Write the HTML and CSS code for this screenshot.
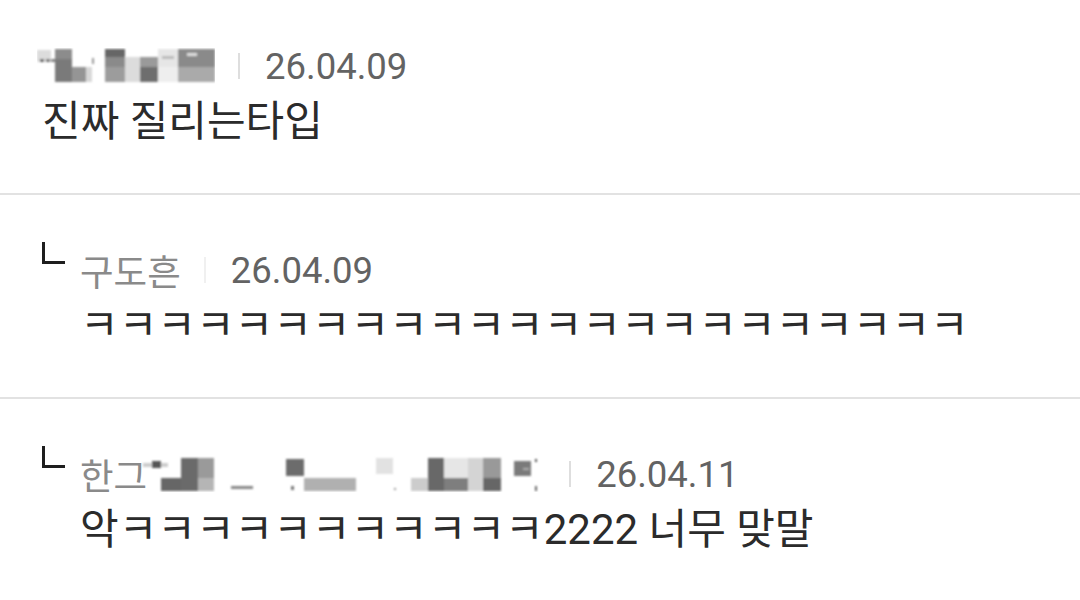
FILE: index.html
```html
<!DOCTYPE html>
<html lang="ko">
<head>
    <meta charset="UTF-8">
    <meta name="viewport" content="width=device-width, initial-scale=1.0">
    <title>댓글</title>
    <link rel="stylesheet" href="styles.css">
</head>
<body>
    <ul class="comments">
        <li class="comment">
            <div class="comment-body">
                <div class="meta">
                    <svg class="mosaic mosaic-1" width="178" height="36" viewBox="0 0 178 36">
                        <defs>
                            <filter id="soft1"><feGaussianBlur stdDeviation="0.9"/></filter>
                        </defs>
                        <g filter="url(#soft1)">
                            <rect x="0" y="2" width="14" height="12" fill="#dcdcdc"/>
                            <rect x="3" y="11" width="4" height="3" fill="#666"/>
                            <rect x="9" y="11" width="4" height="3" fill="#777"/>
                            <rect x="14" y="11" width="4" height="3" fill="#888"/>
                            <rect x="18" y="1" width="17" height="10" fill="#8c8c8c"/>
                            <rect x="18" y="11" width="17" height="23" fill="#7a7a7a"/>
                            <rect x="35" y="19" width="14" height="15" fill="#959595"/>
                            <rect x="49" y="19" width="6" height="15" fill="#d8d8d8"/>
                            <rect x="55" y="10" width="2" height="6" fill="#999"/>
                            <rect x="68" y="1" width="20" height="8" fill="#666"/>
                            <rect x="68" y="9" width="20" height="10" fill="#8a8a8a"/>
                            <rect x="68" y="19" width="20" height="15" fill="#9c9c9c"/>
                            <rect x="88" y="9" width="15" height="25" fill="#dcdcdc"/>
                            <rect x="103" y="9" width="18" height="10" fill="#9a9a9a"/>
                            <rect x="103" y="19" width="18" height="15" fill="#6e6e6e"/>
                            <rect x="121" y="1" width="20" height="18" fill="#e6e6e6"/>
                            <rect x="125" y="8" width="12" height="3" fill="#bbb"/>
                            <rect x="121" y="19" width="20" height="15" fill="#eee"/>
                            <rect x="141" y="1" width="37" height="18" fill="#8a8a8a"/>
                            <rect x="150" y="5" width="10" height="3" fill="#ddd"/>
                            <rect x="141" y="19" width="37" height="15" fill="#aaa"/>
                        </g>
                    </svg>
                    <span class="sep"></span>
                    <span class="date">26.04.09</span>
                </div>
                <p class="text">진짜 질리는타입</p>
            </div>
        </li>

        <li class="comment reply">
            <span class="reply-mark"></span>
            <div class="comment-body">
                <div class="meta">
                    <span class="name">구도흔</span>
                    <span class="sep sep-faint"></span>
                    <span class="date">26.04.09</span>
                </div>
                <p class="text">ㅋㅋㅋㅋㅋㅋㅋㅋㅋㅋㅋㅋㅋㅋㅋㅋㅋㅋㅋㅋㅋㅋㅋ</p>
            </div>
        </li>

        <li class="comment reply">
            <span class="reply-mark"></span>
            <div class="comment-body">
                <div class="meta">
                    <span class="name">한그</span>
                    <svg class="mosaic mosaic-3" width="420" height="36" viewBox="0 0 420 36">
                        <defs>
                            <filter id="soft3"><feGaussianBlur stdDeviation="0.9"/></filter>
                        </defs>
                        <g filter="url(#soft3)">
                            <rect x="17" y="7" width="25" height="4" fill="#ccc"/>
                            <rect x="26" y="5" width="9" height="7" fill="#555"/>
                            <rect x="35" y="22" width="20" height="13" fill="#666"/>
                            <rect x="55" y="2" width="17" height="33" fill="#6a6a6a"/>
                            <rect x="72" y="2" width="16" height="20" fill="#9a9a9a"/>
                            <rect x="72" y="22" width="16" height="13" fill="#b5b5b5"/>
                            <rect x="105" y="30" width="22" height="3" fill="#888"/>
                            <rect x="160" y="3" width="18" height="17" fill="#6c6c6c"/>
                            <rect x="165" y="30" width="3" height="4" fill="#777"/>
                            <rect x="178" y="22" width="52" height="13" fill="#b0b0b0"/>
                            <rect x="250" y="2" width="17" height="16" fill="#e2e2e2"/>
                            <rect x="268" y="32" width="2" height="2" fill="#999"/>
                            <rect x="285" y="22" width="17" height="13" fill="#ccc"/>
                            <rect x="302" y="2" width="16" height="33" fill="#686868"/>
                            <rect x="318" y="2" width="24" height="20" fill="#e6e6e6"/>
                            <rect x="318" y="22" width="24" height="13" fill="#7e7e7e"/>
                            <rect x="342" y="2" width="15" height="33" fill="#d4d4d4"/>
                            <rect x="357" y="2" width="18" height="20" fill="#999"/>
                            <rect x="357" y="22" width="18" height="13" fill="#666"/>
                            <rect x="388" y="5" width="17" height="15" fill="#7a7a7a"/>
                            <rect x="397" y="12" width="6" height="2" fill="#aaa"/>
                            <rect x="409" y="3" width="2" height="3" fill="#555"/>
                            <rect x="409" y="30" width="2" height="5" fill="#666"/>
                        </g>
                    </svg>
                    <span class="sep"></span>
                    <span class="date">26.04.11</span>
                </div>
                <p class="text">악ㅋㅋㅋㅋㅋㅋㅋㅋㅋㅋㅋ2222 너무 맞말</p>
            </div>
        </li>
    </ul>
</body>
</html>
```

FILE: styles.css
```css
:root {
    --text-color: #2b2b2b;
    --date-color: #636363;
    --name-color: #8a8a8a;
    --line-color: #e2e2e2;
}

* {
    margin: 0;
    padding: 0;
    box-sizing: border-box;
}

body {
    background: #ffffff;
    color: var(--text-color);
    font-family: Roboto, "Noto Sans CJK KR", sans-serif;
    overflow: hidden;
}

.comments {
    list-style: none;
    margin-top: -9px;
}

.comment {
    display: flex;
    align-items: flex-start;
    padding: 51px 0 45px 42px;
    border-bottom: 2px solid var(--line-color);
}

.comment-body {
    display: flex;
    flex-direction: column;
}

.meta {
    display: flex;
    align-items: center;
    height: 48px;
}

.mosaic-1 {
    margin-left: -5px;
}

.mosaic-3 {
    margin-left: -21px;
}

.name {
    font-size: 36.5px;
    color: var(--name-color);
}

.sep {
    width: 2px;
    height: 26px;
    background: #dedede;
    margin: 0 25px 0 23px;
}

.sep-faint {
    background: #f0f0f0;
}

.date {
    font-size: 36.5px;
    color: var(--date-color);
}

.text {
    font-size: 42px;
    line-height: 52px;
    margin-top: 6px;
    white-space: nowrap;
}

.reply-mark {
    width: 23px;
    height: 22px;
    margin: -4px 15px 0 0;
    border-left: 3px solid #1e1e1e;
    border-bottom: 3px solid #1e1e1e;
    flex-shrink: 0;
}
```
